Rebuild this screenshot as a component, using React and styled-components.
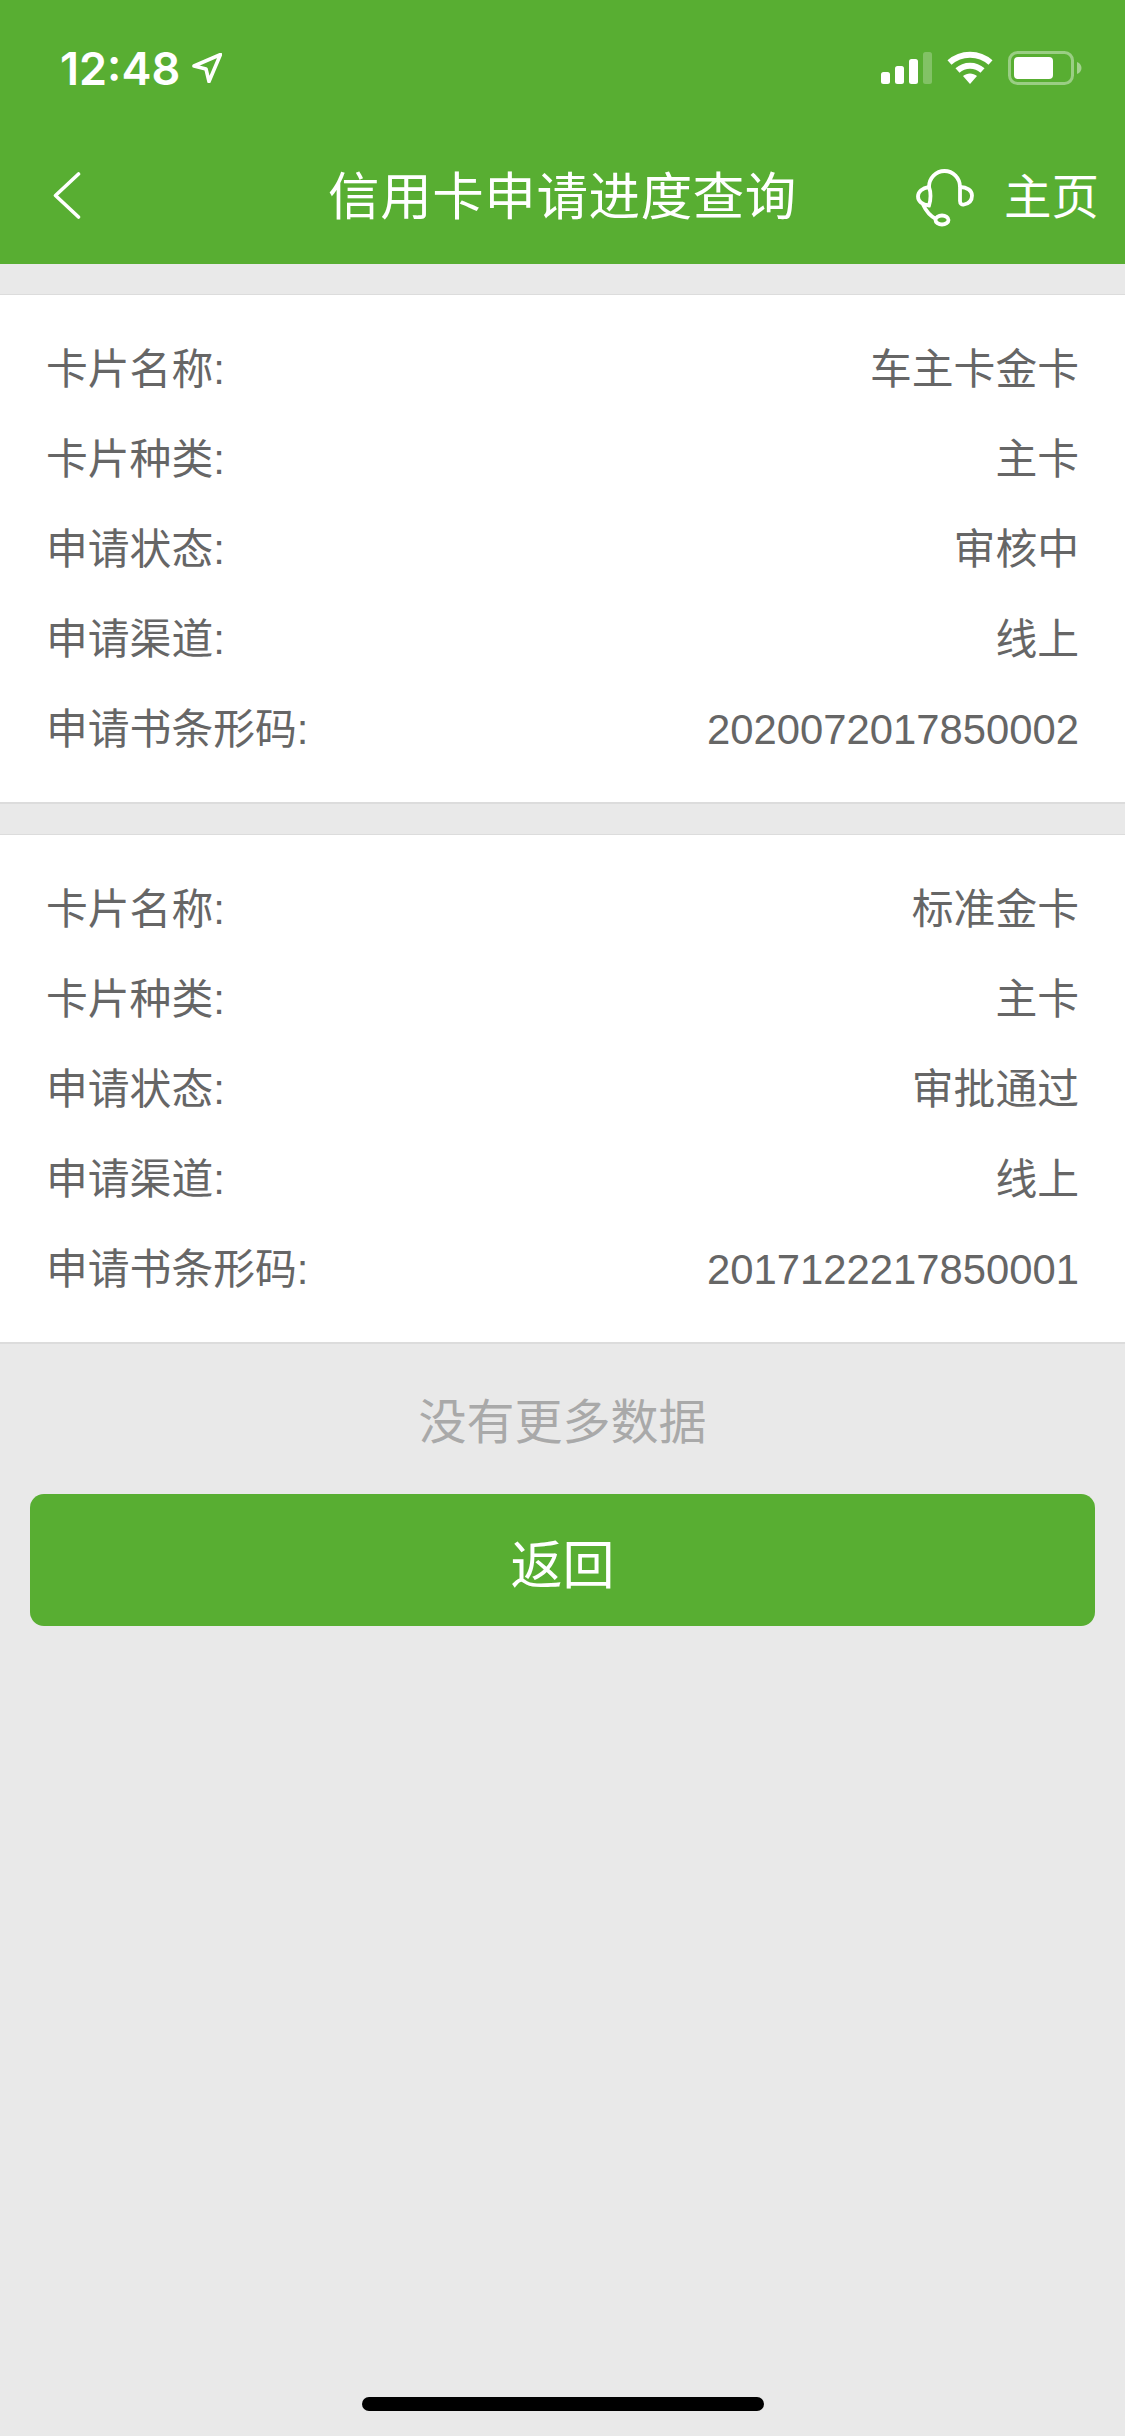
import React from 'react';
import styled, { createGlobalStyle } from 'styled-components';

const GlobalStyle = createGlobalStyle`
  html, body {
    margin: 0;
    padding: 0;
    background: #e9e9e9;
  }
`;

const Page = styled.div`
  position: relative;
  width: 1125px;
  height: 2436px;
  background: #e9e9e9;
  font-family: 'Liberation Sans', 'Noto Sans CJK SC', sans-serif;
  overflow: hidden;
`;

const Header = styled.header`
  height: 264px;
  background: #58ae32;
  color: #fff;
  display: flex;
  flex-direction: column;
`;

const StatusBar = styled.div`
  height: 132px;
  display: flex;
  align-items: center;
  justify-content: space-between;
  padding: 4px 43px 0 60px;
  box-sizing: border-box;
`;

const TimeGroup = styled.div`
  display: flex;
  align-items: center;
  gap: 12px;
`;

const Time = styled.span`
  font-family: Inter, 'Liberation Sans', sans-serif;
  font-size: 45px;
  font-weight: 600;
  line-height: 1;
`;

const StatusIcons = styled.div`
  display: flex;
  align-items: center;
  gap: 15px;
`;

const NavBar = styled.div`
  height: 132px;
  display: grid;
  grid-template-columns: 1fr auto 1fr;
  align-items: center;
  padding: 0 26px;
  box-sizing: border-box;
`;

const Title = styled.h1`
  margin: 0;
  font-size: 51.5px;
  font-weight: 400;
  letter-spacing: 0.6px;
  line-height: 1;
`;

const NavRight = styled.div`
  display: flex;
  align-items: center;
  justify-content: flex-end;
  gap: 30px;
`;

const HomeLabel = styled.span`
  font-size: 47.5px;
  line-height: 1;
`;

const BackButton = styled.div`
  display: flex;
  align-items: center;
  padding-left: 27px;
  position: relative;
  top: -3px;
`;

const Cards = styled.div`
  padding-top: 30px;
  display: flex;
  flex-direction: column;
  gap: 30px;
`;

const Card = styled.section`
  background: #fff;
  border-top: 1px solid #dcdcdc;
  border-bottom: 2px solid #dcdcdc;
  padding: 30px 46px 27px 46px;
`;

const Row = styled.div`
  height: 90px;
  line-height: 90px;
  display: flex;
  align-items: baseline;
  justify-content: space-between;
  font-size: 41.8px;
  color: #666;
`;

const NoMore = styled.div`
  height: 150px;
  padding-bottom: 3px;
  box-sizing: border-box;
  display: flex;
  align-items: center;
  justify-content: center;
  font-size: 48px;
  color: #a9a9a9;
`;

const ReturnButton = styled.button`
  display: block;
  width: 1065px;
  height: 132px;
  margin: 0 30px;
  border: 0;
  border-radius: 14px;
  background: #58ae32;
  color: #fff;
  font-family: inherit;
  font-size: 52px;
  padding: 3px 0 0;
`;

const HomeIndicator = styled.div`
  position: absolute;
  left: 362px;
  bottom: 25px;
  width: 402px;
  height: 14px;
  border-radius: 7px;
  background: #000;
`;

const LocationIcon = () => (
  <svg width="30" height="30" viewBox="0 0 30 30" fill="none">
    <path d="M2 13 L28.5 1.5 L17 28.5 L14 16 Z" stroke="#fff" strokeWidth="3.6" strokeLinejoin="round" />
  </svg>
);

const SignalIcon = () => (
  <svg width="51" height="32" viewBox="0 0 51 32" fill="#fff">
    <rect x="0" y="20" width="9" height="12" rx="2.5" />
    <rect x="14" y="14" width="9" height="18" rx="2.5" />
    <rect x="28" y="7" width="9" height="25" rx="2.5" />
    <rect x="42" y="0" width="9" height="32" rx="2.5" opacity="0.25" />
  </svg>
);

const WifiIcon = () => (
  <svg width="46" height="34" viewBox="0 0 46 34" fill="none">
    <path d="M2.5 11.5 C14 1 32 1 43.5 11.5" stroke="#fff" strokeWidth="6" />
    <path d="M10.5 19.5 C17.5 13 28.5 13 35.5 19.5" stroke="#fff" strokeWidth="6" />
    <path d="M16 25 C20 21.6 26 21.6 30 25 L23 33 Z" fill="#fff" />
  </svg>
);

const BatteryIcon = () => (
  <svg width="74" height="34" viewBox="0 0 74 34" fill="none">
    <rect x="1.5" y="1.5" width="63" height="31" rx="8" stroke="#fff" strokeOpacity="0.4" strokeWidth="3" />
    <rect x="6" y="6" width="39" height="22" rx="4" fill="#fff" />
    <path d="M69 11 C72 12 73.5 14.5 73.5 17 C73.5 19.5 72 22 69 23 Z" fill="#fff" fillOpacity="0.45" />
  </svg>
);

const BackIcon = () => (
  <svg width="28" height="47" viewBox="0 0 28 47" fill="none">
    <path d="M25.5 2 L2.5 23.5 L25.5 45" stroke="#fff" strokeWidth="3.6" strokeLinecap="round" strokeLinejoin="round" />
  </svg>
);

const HeadsetIcon = () => (
  <svg width="58" height="58" viewBox="0 0 58 58" fill="none" stroke="#fff" strokeWidth="3.8">
    <path d="M13 18 A15.5 16 0 0 1 44 18" />
    <path d="M13 18 C6 19 2 23 2 27.5 C2 32 6 36 13 36.5 C15 31 15 23 13 18 Z" />
    <path d="M44 18 L44 32 C44 35 46 36 48 35.5 C53 34.5 56 31.5 56 26.5 C56 21.5 51 18 44 18 Z" />
    <path d="M7 35.5 C10 42 14 47 20 50" />
    <ellipse cx="26" cy="51" rx="6.5" ry="4.5" />
  </svg>
);

const cards = [
  { name: '车主卡金卡', kind: '主卡', status: '审核中', channel: '线上', code: '2020072017850002' },
  { name: '标准金卡', kind: '主卡', status: '审批通过', channel: '线上', code: '2017122217850001' },
];

function InfoCard({ card }) {
  return (
    <Card>
      <Row><span>卡片名称:</span><span>{card.name}</span></Row>
      <Row><span>卡片种类:</span><span>{card.kind}</span></Row>
      <Row><span>申请状态:</span><span>{card.status}</span></Row>
      <Row><span>申请渠道:</span><span>{card.channel}</span></Row>
      <Row><span>申请书条形码:</span><span>{card.code}</span></Row>
    </Card>
  );
}

export default function App() {
  return (
    <Page>
      <GlobalStyle />
      <Header>
        <StatusBar>
          <TimeGroup>
            <Time>12:48</Time>
            <LocationIcon />
          </TimeGroup>
          <StatusIcons>
            <SignalIcon />
            <WifiIcon />
            <BatteryIcon />
          </StatusIcons>
        </StatusBar>
        <NavBar>
          <BackButton><BackIcon /></BackButton>
          <Title>信用卡申请进度查询</Title>
          <NavRight>
            <HeadsetIcon />
            <HomeLabel>主页</HomeLabel>
          </NavRight>
        </NavBar>
      </Header>
      <Cards>
        {cards.map((card) => (
          <InfoCard key={card.code} card={card} />
        ))}
      </Cards>
      <NoMore>没有更多数据</NoMore>
      <ReturnButton>返回</ReturnButton>
      <HomeIndicator />
    </Page>
  );
}
